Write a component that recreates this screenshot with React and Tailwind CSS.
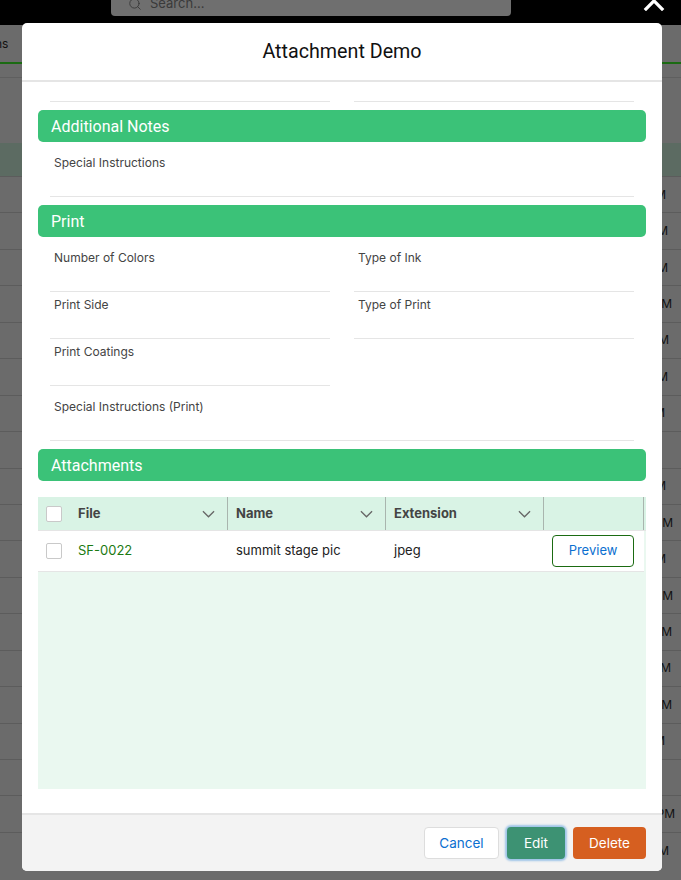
import { Search } from "lucide-react";

const font = { fontFamily: "Inter, sans-serif" };
const titleFont = { fontFamily: "Roboto, sans-serif" };

// right edge of the time text poking out from behind the modal, one per row
const rows = [
  { t: "M", end: 666 },
  { t: "M", end: 668 },
  { t: "M", end: 668 },
  { t: "M", end: 672 },
  { t: "M", end: 669 },
  { t: "M", end: 668 },
  { t: "M", end: 665 },
  { t: "", end: 681 },
  { t: "M", end: 666 },
  { t: "M", end: 673 },
  { t: "M", end: 666 },
  { t: "M", end: 673 },
  { t: "M", end: 672 },
  { t: "M", end: 671 },
  { t: "M", end: 672 },
  { t: "M", end: 665 },
  { t: "", end: 681 },
  { t: "PM", end: 675 },
  { t: "M", end: 669 },
];

function Field({ label, className = "" }) {
  return (
    <div className={`border-b border-[#e5e5e5] pl-1 ${className}`}>
      <p className="text-[12px] leading-[18px] text-[#444]">{label}</p>
    </div>
  );
}

function SectionBar({ title }) {
  return (
    <div className="flex h-8 items-center rounded-[5px] bg-[#3bc278] px-[13px] pt-[2px] text-[16px] text-white" style={titleFont}>
      {title}
    </div>
  );
}

function Chevron() {
  return (
    <svg viewBox="0 0 14 8" className="h-2 w-[13px] text-[#666]" fill="none" stroke="currentColor" strokeWidth="1.4">
      <path d="M1 1l6 6 6-6" />
    </svg>
  );
}

function HeaderCell({ label, className }) {
  return (
    <div className={`flex items-center justify-between border-r border-[#a9b5ae] pl-2 pr-[12px] ${className}`}>
      <span className="text-[13px] font-bold text-[#444]">{label}</span>
      {label && <Chevron />}
    </div>
  );
}

function Checkbox() {
  return <span className="block h-4 w-4 rounded-[2px] border border-[#c9c9c9] bg-white" />;
}

export default function App() {
  return (
    <div className="relative h-[880px] w-[681px] overflow-hidden bg-[#6b6b6b]" style={font}>
      <div className="flex h-[25px] bg-black pl-[111px]">
        <div className="-mt-2 flex h-[24px] w-[400px] items-center gap-2 rounded-b bg-[#6f6f6f] pl-[17px] text-[13px] text-[#3a3a3a]">
          <Search size={14} strokeWidth={1.6} />
          Search...
        </div>
      </div>
      <div className="-ml-[5px] h-[37px] pt-[10px] text-[12px] text-[#111]">ns</div>
      <div className="h-[2px] bg-[#1b6b12]" />
      <div className="h-[14px] border-b border-[#5f5f5f]" />
      <div className="h-[65px] bg-[#6b6b6b]" />
      <div className="flex flex-col">
        <div className="h-[33px] bg-[#5c6b62]" />
        {rows.map((row, i) => (
          <div
            key={i}
            className="flex h-[36.45px] items-center justify-end border-t border-[#5c5c5c] text-[12px] text-[#111]"
            style={{ paddingRight: 681 - row.end }}
          >
            {row.t}
          </div>
        ))}
      </div>

      <svg viewBox="0 0 24 12" className="absolute left-[642px] top-0 h-[11px] w-[24px]" fill="none" stroke="white" strokeWidth="3.6">
        <path d="M2 11L12 1l10 10" />
      </svg>

      <div className="absolute left-[22px] top-[23px] flex h-[848px] w-[640px] flex-col overflow-hidden rounded-[5px] bg-white">
        <div className="flex h-[59px] items-center justify-center border-b-2 border-[#e5e5e5] text-[19.7px] text-[#111]" style={titleFont}>
          Attachment Demo
        </div>
        <div className="flex-1 px-4">
          <div className="grid grid-cols-2 gap-x-6 px-3">
            <div className="h-[20px] border-b border-[#e5e5e5]" />
            <div className="h-[20px] border-b border-[#e5e5e5]" />
          </div>
          <div className="mt-2">
            <SectionBar title="Additional Notes" />
          </div>
          <div className="px-3">
            <Field label="Special Instructions" className="h-[55px] pt-[12px]" />
          </div>
          <div className="mt-2">
            <SectionBar title="Print" />
          </div>
          <div className="grid grid-cols-2 gap-x-6 px-3">
            <Field label="Number of Colors" className="h-[55px] pt-[12px]" />
            <Field label="Type of Ink" className="h-[55px] pt-[12px]" />
            <Field label="Print Side" className="h-[47px] pt-[4px]" />
            <Field label="Type of Print" className="h-[47px] pt-[4px]" />
            <Field label="Print Coatings" className="h-[47px] pt-[4px]" />
          </div>
          <div className="px-3">
            <Field label="Special Instructions (Print)" className="h-[55px] pt-[12px]" />
          </div>
          <div className="mt-2">
            <SectionBar title="Attachments" />
          </div>
          <div className="mt-4 h-[292px] bg-[#eaf8f0]">
            <div className="flex h-[34px] border-b border-[#e5e5e5] bg-[#d9f3e5]">
              <div className="flex w-[32px] items-center justify-center">
                <Checkbox />
              </div>
              <HeaderCell label="File" className="w-[158px]" />
              <HeaderCell label="Name" className="w-[158px]" />
              <HeaderCell label="Extension" className="w-[158px]" />
              <HeaderCell label="" className="w-[100px]" />
            </div>
            <div className="flex h-[41px] w-[606px] items-center border-b border-[#e5e5e5] bg-white text-[13px] text-[#222]">
              <div className="flex w-[32px] justify-center">
                <Checkbox />
              </div>
              <div className="w-[158px] pl-2 text-[#1b7a12]">SF-0022</div>
              <div className="w-[158px] pl-2">summit stage pic</div>
              <div className="w-[158px] pl-2">jpeg</div>
              <div className="pl-2">
                <button className="h-8 w-[82px] rounded border border-[#1b6b12] text-[13px] text-[#0b6fd0]">Preview</button>
              </div>
            </div>
          </div>
        </div>
        <div className="flex h-[58px] items-center justify-end gap-2 border-t-2 border-[#e5e5e5] bg-[#f3f3f3] pr-4">
          <button className="h-8 w-[75px] rounded border border-[#dddddd] bg-white text-[13.5px] text-[#0b6fd0]">Cancel</button>
          <button className="h-8 w-[58px] rounded bg-[#3d9273] text-[13.5px] text-white shadow-[0_0_2px_2px_#9fc5e8]">Edit</button>
          <button className="h-8 w-[73px] rounded bg-[#d65f20] text-[13.5px] text-white">Delete</button>
        </div>
      </div>
    </div>
  );
}
